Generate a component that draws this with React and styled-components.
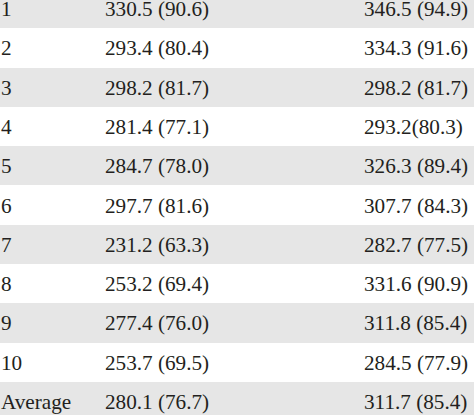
import React from 'react';
import styled, { createGlobalStyle } from 'styled-components';

const GlobalStyle = createGlobalStyle`
  html, body {
    margin: 0;
    padding: 0;
    background: #ffffff;
    overflow: hidden;
  }
`

const Table = styled.div`
  width: 474px;
  margin-top: -11px;
  font-family: "Liberation Serif", "Times New Roman", serif;
  font-size: 21.2px;
  color: #231f20;
`

const Row = styled.div`
  display: grid;
  grid-template-columns: 105px 259px 1fr;
  align-items: center;
  height: 39.3px;
  background: ${p => (p.$shaded ? '#e6e6e6' : '#ffffff')};
`

const Cell = styled.div`
  padding-left: ${p => p.$first ? '1px' : '0'};
  padding-top: 2px;
  white-space: nowrap;
  line-height: 1;
`

const rows = [
  ['1', '330.5 (90.6)', '346.5 (94.9)'],
  ['2', '293.4 (80.4)', '334.3 (91.6)'],
  ['3', '298.2 (81.7)', '298.2 (81.7)'],
  ['4', '281.4 (77.1)', '293.2(80.3)'],
  ['5', '284.7 (78.0)', '326.3 (89.4)'],
  ['6', '297.7 (81.6)', '307.7 (84.3)'],
  ['7', '231.2 (63.3)', '282.7 (77.5)'],
  ['8', '253.2 (69.4)', '331.6 (90.9)'],
  ['9', '277.4 (76.0)', '311.8 (85.4)'],
  ['10', '253.7 (69.5)', '284.5 (77.9)'],
  ['Average', '280.1 (76.7)', '311.7 (85.4)'],
];

const App = () => {
  return (
    <>
      <GlobalStyle />
      <Table>
        {rows.map((r, i) => (
          <Row key={r[0]} $shaded={i % 2 === 0}>
            <Cell $first>{r[0]}</Cell>
            <Cell>{r[1]}</Cell>
            <Cell>{r[2]}</Cell>
          </Row>
        ))}
      </Table>
    </>
  );
};

export default App;
